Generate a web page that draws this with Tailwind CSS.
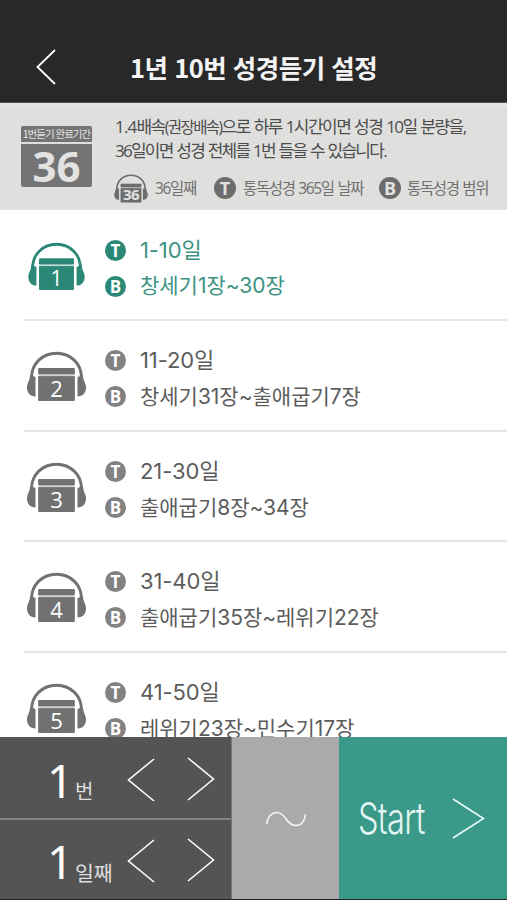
<!DOCTYPE html>
<html lang="ko">
<head>
<meta charset="utf-8">
<title>1년 10번 성경듣기 설정</title>
<script src="https://cdn.jsdelivr.net/npm/@tailwindcss/browser@4"></script>
</head>
<body class="w-[507px] h-[900px] overflow-hidden bg-white font-['Inter','Noto_Sans_CJK_KR',sans-serif]">
<svg class="hidden">
  <symbol id="phones" viewBox="0 0 61 51">
    <path d="M5.500 31V27C5.500 12.500 16.500 2.200 30.500 2.200S55.500 12.500 55.500 27V31" fill="none" stroke="currentColor" stroke-width="2.900"/>
    <path d="M4 24L9.500 26V45.500C4 45.500 1 41.500 1 36.500C1 31.500 4 30 4 24ZM57 24L51.500 26V45.500C57 45.500 60 41.500 60 36.500C60 31.500 57 30 57 24Z" fill="currentColor"/>
    <path d="M12.700 17.500H48.300V23H12.700ZM12.700 25.200H48.300V49.500H12.700Z" fill="currentColor" stroke="currentColor" stroke-width="1" stroke-linejoin="round"/>
  </symbol>
  <symbol id="prev" viewBox="0 0 28 44"><path d="M27 1L1.500 22L27 43" fill="none" stroke="currentColor" stroke-width="1.600"/></symbol>
  <symbol id="next" viewBox="0 0 28 44"><path d="M1 1L26.500 22L1 43" fill="none" stroke="currentColor" stroke-width="1.600"/></symbol>
</svg>
<div class="flex flex-col h-[900px]">
  <header class="h-[103px] shrink-0 bg-[#282828] border-b border-[#555] flex items-start text-white">
    <svg class="w-[20px] h-[36px] ml-[36px] mt-[49px] shrink-0" viewBox="0 0 20 36"><path d="M19 1L1.500 18L19 35" fill="none" stroke="currentColor" stroke-width="1.800"/></svg>
    <h1 class="ml-[74px] mt-[49px] h-[36px] leading-[36px] text-[25.5px] font-bold font-['Noto_Sans_CJK_KR',sans-serif] tracking-[-0.5px] whitespace-nowrap text-[#f4f4f4]">1년 10번 성경듣기 설정</h1>
  </header>

  <section class="h-[107px] shrink-0 bg-[#dfdfde] border-t-4 border-[#e5e5e4] flex font-['Open_Sans','Noto_Sans_CJK_KR',sans-serif]">
    <div class="w-[71px] ml-[21px] mt-[19px] flex flex-col gap-[2px] text-[#e2e2e1]">
      <div class="h-[16px] bg-[#747474] rounded-t-[2px] flex items-center justify-center text-[10.5px] leading-[16px] tracking-[-1px] font-['Noto_Sans_CJK_KR'] whitespace-nowrap">1번듣기 완료기간</div>
      <div class="h-[43px] bg-[#747474] rounded-b-[2px] flex items-center justify-center text-[42px] leading-[43px] font-bold">36</div>
    </div>
    <div class="ml-[23px] mt-[7px] whitespace-nowrap text-[#4d4d4d] [word-spacing:1px]">
      <p class="h-[25px] leading-[25px] text-[17px] tracking-[-1.55px]"><span class="tracking-[-0.8px]">1.4</span>배속<span class="text-[15.5px]">(권장배속)</span>으로 하루 1시간이면 성경 10일 분량을,</p>
      <p class="h-[24px] leading-[24px] text-[17px] tracking-[-1.75px]">36일이면 성경 전체를 1번 들을 수 있습니다.</p>
      <div class="flex items-center h-[32px] mt-[9px] -ml-[2px] text-[15.5px] tracking-[-1.35px] text-[#707070]">
        <div class="relative w-[36px] h-[29px] shrink-0 text-[#6c6c6c]"><svg class="w-[36px] h-[29px]"><use href="#phones" width="36" height="29"/></svg><span class="absolute inset-x-0 top-[13px] text-center text-[15px] leading-[15px] font-bold text-[#e2e2e1] tracking-[-0.5px]">36</span></div>
        <span class="ml-[6px] w-[59px] pt-[2px]">36일째</span>
        <span class="w-[22px] h-[22px] shrink-0 rounded-full bg-[#6c6c6c] text-[#e2e2e1] text-[18px] leading-[22px] font-bold text-center tracking-normal">T</span>
        <span class="ml-[7px] w-[136px] pt-[2px]">통독성경 365일 날짜</span>
        <span class="w-[22px] h-[22px] shrink-0 rounded-full bg-[#6c6c6c] text-[#e2e2e1] text-[18px] leading-[22px] font-bold text-center tracking-normal">B</span>
        <span class="ml-[6px] pt-[2px]">통독성경 범위</span>
      </div>
    </div>
  </section>

  <main id="list" class="h-[527px] shrink-0 overflow-hidden pl-[24px] pt-[0.6px]"></main>

  <footer class="h-[162px] shrink-0 flex text-white font-['Open_Sans','Noto_Sans_CJK_KR',sans-serif]">
    <div class="w-[232px] bg-[#545454] border-r border-[#777] flex flex-col">
      <div class="h-[83px] shrink-0 border-b-2 border-[#858585] flex items-start">
        <span class="ml-[47px] mt-[13px] w-[26px] text-[46px] leading-[60px] font-normal font-['Noto_Sans']">1</span>
        <span class="mt-[38px] ml-[2px] w-[52px] text-[20px] leading-[34px] text-[#ddd]">번</span>
        <svg class="w-[28px] h-[44px] mt-[21px] shrink-0"><use href="#prev"/></svg>
        <svg class="w-[28px] h-[44px] mt-[20px] ml-[32px] shrink-0"><use href="#next"/></svg>
      </div>
      <div class="flex items-start">
        <span class="ml-[47px] mt-[11px] w-[26px] text-[46px] leading-[60px] font-normal font-['Noto_Sans']">1</span>
        <span class="mt-[36px] ml-[2px] w-[52px] text-[20.5px] leading-[34px] text-[#ddd] whitespace-nowrap">일째</span>
        <svg class="w-[28px] h-[44px] mt-[19px] shrink-0"><use href="#prev"/></svg>
        <svg class="w-[28px] h-[44px] mt-[18px] ml-[32px] shrink-0"><use href="#next"/></svg>
      </div>
    </div>
    <div class="w-[107px] bg-[#aaaaaa] flex items-center justify-center">
      <svg class="w-[42px] h-[16px] mt-[1px]" viewBox="0 0 42 16"><path d="M1.500 13C3 5 7 1.500 12 1.500C21 1.500 21 14.500 31 14.500C36 14.500 39.500 11 40.500 3" fill="none" stroke="#f4f4f4" stroke-width="1.500"/></svg>
    </div>
    <div class="flex-1 bg-[#3b998a] flex items-center">
      <span class="ml-[19px] w-[94px] text-[44px] font-light origin-left scale-x-[.74] font-['Inter'] leading-[60px] tracking-[-1px] text-[#e2f6f2]">Start</span>
      <svg class="w-[33px] h-[41px] mt-[1px]" viewBox="0 0 33 41"><path d="M1 1L31.500 20.500L1 40" fill="none" stroke="#eafffa" stroke-width="1.500"/></svg>
    </div>
  </footer>
  <div class="h-px bg-[#222]"></div>
</div>
<script>
const days = [
  ['1-10일', '창세기1장~30장'],
  ['11-20일', '창세기31장~출애굽기7장'],
  ['21-30일', '출애굽기8장~34장'],
  ['31-40일', '출애굽기35장~레위기22장'],
  ['41-50일', '레위기23장~민수기17장'],
];
document.getElementById('list').innerHTML = days.map(([t, b], i) => {
  const on = i === 0;
  const badge = on ? 'bg-[#2b8877]' : 'bg-[#828282]';
  const mark = l => `<span class="w-[21px] h-[21px] rounded-full ${badge} text-white text-[17px] leading-[21px] font-bold text-center font-['Open_Sans']">${l}</span>`;
  return `<div class="h-[110.600px] border-b-2 border-[#e5e5e5] flex ${on ? 'text-[#2b8877]' : 'text-[#717171]'}">
    <div class="relative w-[61px] h-[51px] mt-[30px] ml-[2px] ${on ? 'scale-[.955]' : ''}">
      <svg class="w-[61px] h-[51px]"><use href="#phones"/></svg>
      <span class="absolute inset-x-0 top-[24px] text-center text-[22px] leading-[26px] text-white font-['Open_Sans']">${i + 1}</span>
    </div>
    <div class="ml-[18px] mt-[21.500px] flex flex-col">
      <div class="h-[36px] flex items-center">${mark('T')}<span class="ml-[14px] text-[22px] tracking-[-0.1px] whitespace-nowrap ${on ? 'text-[#3c9382]' : 'text-[#5c5c5c]'}">${t}</span></div>
      <div class="h-[36px] flex items-center">${mark('B')}<span class="ml-[14px] text-[21px] tracking-[-0.02px] whitespace-nowrap ${on ? 'text-[#3c9382]' : 'text-[#5c5c5c]'}">${b}</span></div>
    </div>
  </div>`;
}).join('');
</script>
</body>
</html>
